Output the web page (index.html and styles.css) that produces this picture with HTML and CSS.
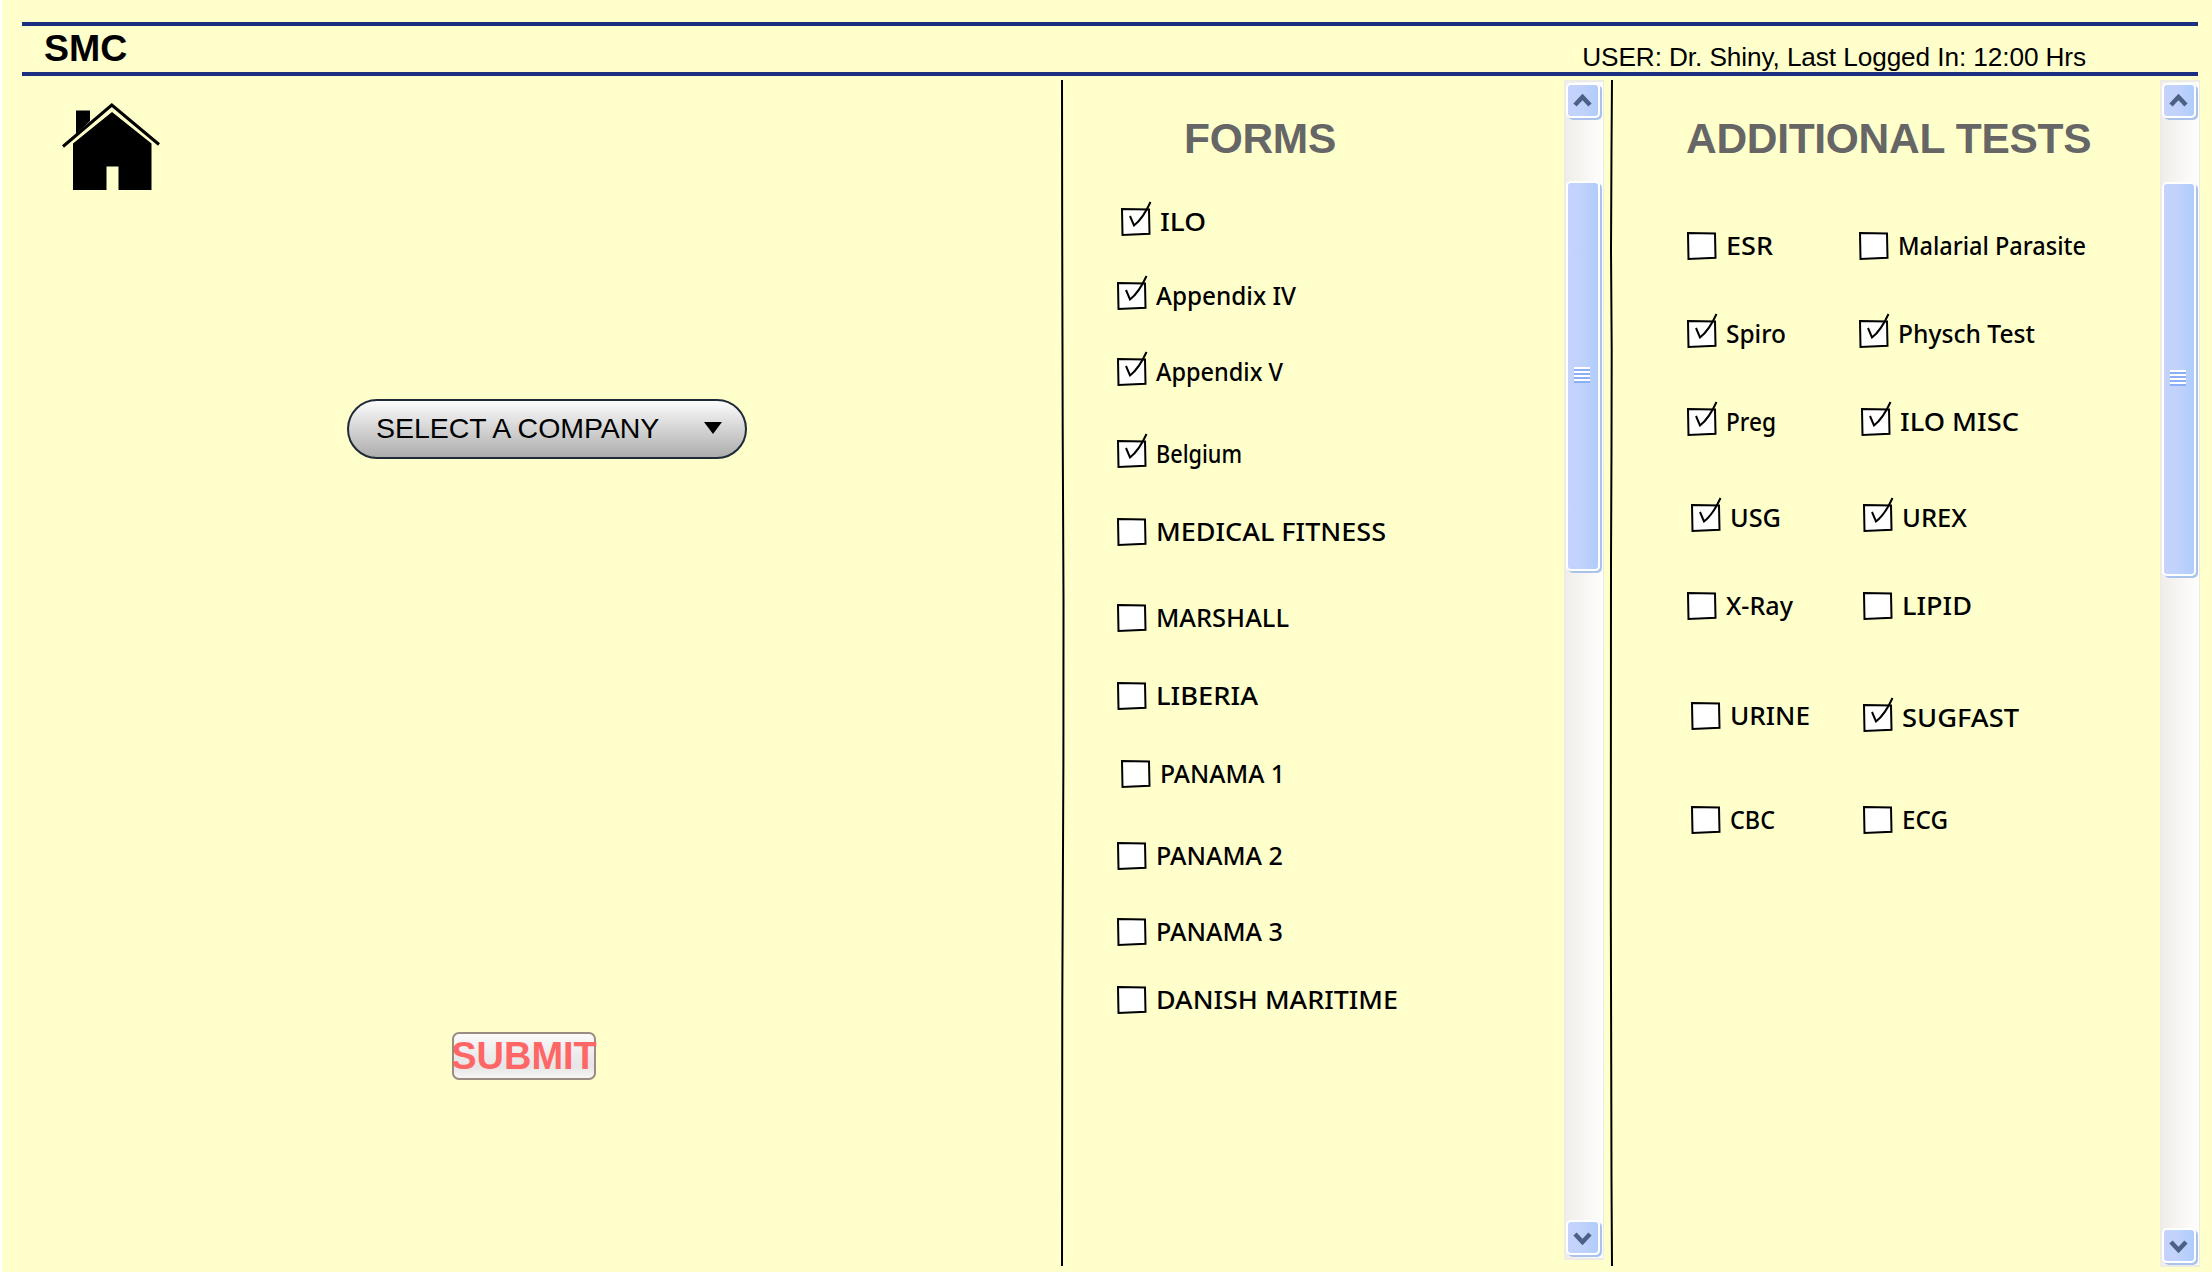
FILE: index.html
```html
<!DOCTYPE html>
<html lang="en">
<head>
<meta charset="utf-8">
<title>SMC</title>
<link rel="stylesheet" href="styles.css">
<script src="app.js" defer></script>
</head>
<body>
<header class="topbar">
  <h1 class="brand">SMC</h1>
  <p class="user">USER: Dr. Shiny, Last Logged In: 12:00 Hrs</p>
</header>
<main class="panels">
  <section class="company">
    <svg class="home" viewBox="60 100 102 92" width="102" height="92" role="img" aria-label="Home">
      <path d="M76 110.5H90V121L76 134.5ZM112 112L151.500 143.500V190H118.500V166.500H106.500V190H73V143.500Z"/>
      <path d="M63 146.500L111.800 105L159 144.500" fill="none" stroke="#000" stroke-width="3"/>
    </svg>
    <button class="select" type="button"><span>SELECT A COMPANY</span>
      <svg width="18" height="12" viewBox="0 0 18 12"><path d="M0 0H18L9 12Z"/></svg>
    </button>
    <button class="submit" type="button">SUBMIT</button>
  </section>
  <svg class="divider" width="6" height="1186" viewBox="1060 80 6 1186"><path d="M1062 80L1062.200 230L1062.700 430L1063.500 600L1063.400 760L1063 850L1062.300 1000L1062 1266"/></svg>
  <section class="forms">
    <h2>FORMS</h2>
    <ul class="list" id="forms"></ul>
  </section>
  <div class="scroll scroll-forms">
    <span class="arrow"><svg width="20" height="14" viewBox="0 0 20 14"><path d="M2 11L9.500 3L17 11"/></svg></span>
    <span class="thumb"><i class="grip"></i></span>
    <span class="arrow"><svg width="20" height="14" viewBox="0 0 20 14"><path d="M2 3L9.500 11L17 3"/></svg></span>
  </div>
  <svg class="divider second" width="6" height="1186" viewBox="1609 80 6 1186"><path d="M1612 80L1611.500 150L1611 250L1611.700 350L1611.500 450L1611 560L1610.800 900L1611.500 1180L1612 1266"/></svg>
  <section class="tests">
    <h2>ADDITIONAL TESTS</h2>
    <ul class="list" id="tests"></ul>
  </section>
  <div class="scroll scroll-tests">
    <span class="arrow"><svg width="20" height="14" viewBox="0 0 20 14"><path d="M2 11L9.500 3L17 11"/></svg></span>
    <span class="thumb"><i class="grip"></i></span>
    <span class="arrow"><svg width="20" height="14" viewBox="0 0 20 14"><path d="M2 3L9.500 11L17 3"/></svg></span>
  </div>
</main>
</body>
</html>
```
FILE: styles.css
```css
* { box-sizing: border-box; }
body {
  margin: 0;
  height: 1272px;
  overflow: hidden;
  padding-top: 22px;
  border-left: 2px solid #fff;
  background: #ffffcc;
  color: #000;
  font-family: "Liberation Sans", Arial, sans-serif;
}
h1, h2, p, ul { margin: 0; padding: 0; }
ul { list-style: none; }
button { font-family: inherit; color: #000; padding: 0; }

.topbar {
  display: flex;
  justify-content: space-between;
  height: 54px;
  margin: 0 14px 0 20px;
  padding: 0 112px 0 22px;
  border-top: 4px solid #1b2f80;
  border-bottom: 4px solid #1b2f80;
}
.brand { font-size: 37.500px; line-height: 44px; }
.user { font-size: 26.200px; letter-spacing: -0.090px; line-height: 30px; padding-top: 16px; white-space: nowrap; }

.panels {
  display: grid;
  grid-template-columns: 1058px 6px 498px 40px 5px 6px 545px 40px;
  align-items: start;
  padding-top: 4px;
}
.divider path { fill: none; stroke: #000; stroke-width: 2; }
.divider { display: block; }
.second { grid-column: 6; }

.company { display: flex; flex-direction: column; align-items: flex-start; }
.home { margin: 20px 0 0 58px; }
.select {
  display: flex;
  align-items: center;
  width: 400px;
  height: 60px;
  margin: 207px 0 0 345px;
  padding: 0 23px 2px 27px;
  justify-content: space-between;
  border: 2px solid #1f2a38;
  border-radius: 30px;
  background: linear-gradient(#fcfcfc, #d4d4d4 50%, #adadad);
  font-size: 28.500px;
  letter-spacing: -0.050px;
  white-space: nowrap;
}
.submit {
  display: flex;
  justify-content: center;
  align-items: center;
  width: 144px;
  height: 48px;
  margin: 573px 0 0 450px;
  padding-top: 1px;
  border: 2px solid #9a8c82;
  border-radius: 7px;
  background: linear-gradient(#fafafa, #ebebeb 50%, #e6e6e6 75%, #f6f6f6);
  color: #ff6666;
  font-size: 38px;
  font-weight: bold;
}

h2 { font-size: 42.500px; letter-spacing: -0.300px; line-height: 48px; color: #666; white-space: nowrap; }
.forms { padding: 35px 0 0 51px; }
.forms h2 { padding-left: 67px; }
.tests { padding: 35px 0 0 72px; }
.tests h2 { margin-left: -1px; }
.list { display: grid; }
.forms .list { margin-top: 45px; grid-template-rows: 74px 76px 82px 78px 86px 78px 78px 82px 76px 68px 28px; }
.tests .list { margin-top: 69px; grid-template-columns: 172px 300px; grid-template-rows: 88px 88px 96px 88px 110px 104px 28px; }
.item { display: flex; gap: 9px; height: 28px; }
.box, .label { display: block; overflow: visible; flex: none; }
.box .frame { fill: #fff; stroke: #000; stroke-width: 2; }
.box .tick { fill: none; stroke: #000; stroke-width: 2; }
.label { font: 500 24.500px "Comic Sans MS", "Noto Sans", sans-serif; }

.scroll {
  display: flex;
  flex-direction: column;
  width: 40px;
  border: solid #ecebe6;
  border-width: 2px 1px 2px 2px;
  background: linear-gradient(90deg, #f0eeea, #fefefd);
}
.scroll-forms { height: 1180px; padding: 1px 1px 1px 0; }
.scroll-tests { height: 1187px; grid-column: 8; padding: 1px 1px 0 0; }
.arrow, .thumb {
  display: flex;
  justify-content: center;
  align-items: center;
  width: 34px;
  margin-right: 2px;
  border: 2px solid #fff;
  border-radius: 5px;
  background: linear-gradient(90deg, #c6d3fc, #c0d2fb 45%, #b0cdfd);
  box-shadow: 2px 2px 0 #a9c3ec;
  flex: none;
}
.arrow { height: 35px; }
.arrow path { fill: none; stroke: #4d6185; stroke-width: 4.500; }
.thumb { margin-top: 63px; height: 390px; }
.scroll-tests .thumb { height: 394px; margin-top: 64px; }
.arrow:last-child { margin-top: auto; margin-bottom: 2px; }
.grip {
  width: 16px;
  height: 16px;
  margin: 0 3px 2px 0;
  background: repeating-linear-gradient(#fff 0 2px, #8caef5 2px 4px);
}
```
FILE: app.js
```js
// Each entry: label, checked, drawn label width, horizontal and vertical offset.
const forms = [
  ["ILO", 1, 46, 4],
  ["Appendix IV", 1, 140, 0],
  ["Appendix V", 1, 127, 0],
  ["Belgium", 1, 86, 0],
  ["MEDICAL FITNESS", 0, 230, 0],
  ["MARSHALL", 0, 133, 0],
  ["LIBERIA", 0, 102, 0],
  ["PANAMA 1", 0, 125, 4],
  ["PANAMA 2", 0, 127, 0],
  ["PANAMA 3", 0, 127, 0],
  ["DANISH MARITIME", 0, 242, 0]
];
const tests = [
  ["ESR", 0, 47, 0], ["Malarial Parasite", 0, 188, 0],
  ["Spiro", 1, 60, 0], ["Physch Test", 1, 137, 0],
  ["Preg", 1, 50, 0], ["ILO MISC", 1, 119, 2],
  ["USG", 1, 51, 4], ["UREX", 1, 65, 4],
  ["X-Ray", 0, 67, 0], ["LIPID", 0, 70, 4],
  ["URINE", 0, 80, 4], ["SUGFAST", 1, 117, 4, 2],
  ["CBC", 0, 45, 4], ["ECG", 0, 46, 4]
];

function item([text, checked, width, dx, dy = 0]) {
  const tick = checked ? '<path class="tick" d="M9 8L13 17.500C20 12 25 4 29.500 -6"/>' : "";
  return `<li class="item" style="margin:${dy}px 0 0 ${dx}px">
    <svg class="box" width="30" height="28"><path class="frame" d="M1 1L28 1.500L28.500 25.800L1.500 27Z"/>${tick}</svg>
    <svg class="label" width="${width}" height="28"><text x="0" y="22.500" textLength="${width}" lengthAdjust="spacingAndGlyphs">${text}</text></svg>
  </li>`;
}

document.getElementById("forms").innerHTML = forms.map(item).join("");
document.getElementById("tests").innerHTML = tests.map(item).join("");
```
